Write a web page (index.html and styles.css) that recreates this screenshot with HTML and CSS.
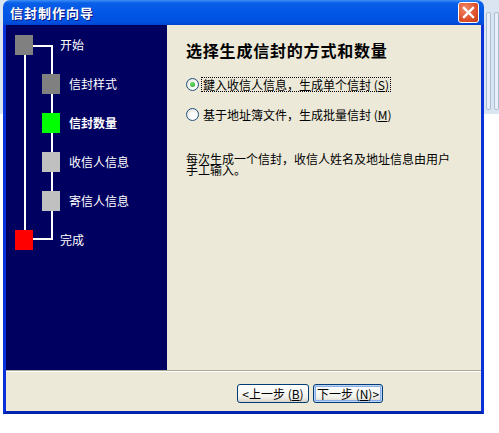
FILE: index.html
```html
<!DOCTYPE html>
<html lang="zh-CN">
  <head>
    <meta charset="UTF-8" />
    <title>信封制作向导</title>
    <link rel="stylesheet" href="styles.css">
  </head>
  <body>
    <div class="screen">
      <div class="window">
        <header class="titlebar">
          <span class="title">信封制作向导</span>
          <span class="close">
            <svg width="13" height="13" viewBox="0 0 13 13">
              <path d="M2 2 L11 11 M11 2 L2 11" stroke="#fff" stroke-width="2.4" stroke-linecap="square" />
            </svg>
          </span>
        </header>

        <div class="frame">
          <div class="main">
            <aside class="steps">
              <span class="line line-left"></span>
              <span class="line line-right"></span>
              <span class="line line-top"></span>
              <span class="line line-bottom"></span>
              <ul>
                <li class="outer"><span class="box grey"></span><span class="label">开始</span></li>
                <li class="inner"><span class="box grey"></span><span class="label">信封样式</span></li>
                <li class="inner"><span class="box green"></span><span class="label current">信封数量</span></li>
                <li class="inner"><span class="box silver"></span><span class="label">收信人信息</span></li>
                <li class="inner"><span class="box silver"></span><span class="label">寄信人信息</span></li>
                <li class="outer"><span class="box red"></span><span class="label">完成</span></li>
              </ul>
            </aside>

            <section class="content">
              <h1>选择生成信封的方式和数量</h1>
              <div class="option">
                <span class="radio checked"></span>
                <span class="text focused">鍵入收信人信息，生成单个信封 (<u>S</u>)</span>
              </div>
              <div class="option">
                <span class="radio"></span>
                <span class="text">基于地址簿文件，生成批量信封 (<u>M</u>)</span>
              </div>
              <p class="desc">每次生成一个信封，收信人姓名及地址信息由用户手工输入。</p>
            </section>
          </div>

          <footer class="footer">
            <button class="btn prev">&lt;上一步 (<u>B</u>)</button>
            <button class="btn next">下一步 (<u>N</u>)&gt;</button>
          </footer>
        </div>
      </div>

      <div class="side">
        <span></span>
        <span></span>
      </div>
    </div>
  </body>
</html>
```

FILE: styles.css
```css
html {
  background-color: #fff;
}

body {
  margin: 0;
  padding: 0;
  background: linear-gradient(#dbe5f2 0, #dbe5f2 114px, #fff 114px);
  font-family: "Noto Sans CJK SC", "DejaVu Sans", sans-serif;
  font-size: 12px;
}

.screen {
  display: flex;
  align-items: flex-start;
  padding-left: 3px;
}

.window {
  width: 482px;
}

/* title bar */

.titlebar {
  height: 25px;
  display: flex;
  align-items: center;
  justify-content: space-between;
  padding: 0 5px 0 7px;
  box-sizing: border-box;
  border-radius: 7px 7px 0 0;
  background: linear-gradient(#3d8ff5 0, #0a5fe8 3px, #0056e6 50%, #0051e0 88%, #0043cc 100%);
}

.title {
  color: #fff;
  font-size: 13px;
  font-weight: bold;
  letter-spacing: 1px;
  text-shadow: 1px 1px #0a1883;
}

.close {
  width: 19px;
  height: 19px;
  border: 1px solid #fff;
  border-radius: 3px;
  display: flex;
  align-items: center;
  justify-content: center;
  background: radial-gradient(circle at 35% 30%, #f08a6a, #e0542f 55%, #c23d16);
}

.frame {
  border: 3px solid #0831d9;
  border-top: 0;
  border-bottom-color: #0024b0;
  background-color: #ece9d8;
}

.main {
  display: flex;
  height: 345px;
}

/* left step track */

.steps {
  position: relative;
  width: 161px;
  background-color: #000060;
  padding-top: 10px;
  box-sizing: border-box;
}

.steps ul {
  list-style: none;
  margin: 0;
  padding: 0;
}

.steps li {
  display: flex;
  align-items: center;
  height: 20px;
  margin-bottom: 19px;
}

.box {
  position: relative;
  z-index: 1;
  width: 18px;
  height: 20px;
}

.outer .box {
  margin-left: 9px;
}

.outer .label {
  margin-left: 27px;
}

.inner .box {
  margin-left: 36px;
}

.inner .label {
  margin-left: 9px;
}

.grey {
  background-color: #808080;
}

.silver {
  background-color: #c0c0c0;
}

.green {
  background-color: #00ff00;
}

.red {
  background-color: #ff0000;
}

.label {
  color: #fff;
  line-height: 20px;
}

.label.current {
  font-weight: bold;
}

.line {
  position: absolute;
  background-color: #fff;
}

.line-left {
  left: 18px;
  top: 30px;
  width: 2px;
  height: 175px;
}

.line-right {
  left: 45px;
  top: 20px;
  width: 2px;
  height: 195px;
}

.line-top {
  left: 27px;
  top: 20px;
  width: 20px;
  height: 2px;
}

.line-bottom {
  left: 27px;
  top: 213px;
  width: 20px;
  height: 2px;
}

/* right content */

.content {
  flex: 1;
  padding: 15px 0 0 19px;
}

h1 {
  margin: 0 0 17px;
  font-size: 16px;
  line-height: 20px;
  font-weight: bold;
  letter-spacing: 0.8px;
  color: #000;
}

.option {
  display: flex;
  align-items: center;
  height: 15px;
  margin-bottom: 15px;
}

.radio {
  width: 11px;
  height: 11px;
  border: 1px solid #1c5180;
  border-radius: 50%;
  margin-right: 2px;
  background: radial-gradient(circle at 60% 65%, #fff 30%, #dcd7cb);
  display: flex;
  align-items: center;
  justify-content: center;
}

.radio.checked::after {
  content: "";
  width: 5px;
  height: 5px;
  border-radius: 50%;
  background: radial-gradient(circle at 40% 40%, #6fe06f, #21a121);
}

.text {
  line-height: 13px;
  padding: 0 1px;
  border: 1px dotted transparent;
}

.text.focused {
  border-color: #000;
}

.desc {
  margin: 31px 0 0;
  width: 270px;
  line-height: 11px;
}

/* footer buttons */

.footer {
  border-top: 1px solid #aca899;
  box-shadow: inset 0 1px #fff;
  height: 41px;
  padding: 13px 98px 0 0;
  box-sizing: border-box;
  display: flex;
  justify-content: flex-end;
  align-items: flex-start;
  gap: 4px;
}

.btn {
  height: 19px;
  padding: 0;
  font-family: "Noto Sans CJK SC", "DejaVu Sans", sans-serif;
  font-size: 12px;
  line-height: 15px;
  color: #000;
  border: 1px solid #003c74;
  border-radius: 3px;
  background: linear-gradient(#ffffff, #f3f3ee 70%, #d8d3c7);
}

.prev {
  width: 72px;
}

.next {
  width: 70px;
  box-shadow: inset 0 0 0 1px #bcd4f6, inset 0 0 0 2px #89ade4;
}

/* window behind on the right */

.side {
  display: flex;
  gap: 3px;
  padding: 12px 0 0 2px;
}

.side span {
  width: 3px;
  height: 96px;
  border: 1px solid #a9bcd6;
  border-radius: 2px;
  background-color: #e9eff7;
}
```
